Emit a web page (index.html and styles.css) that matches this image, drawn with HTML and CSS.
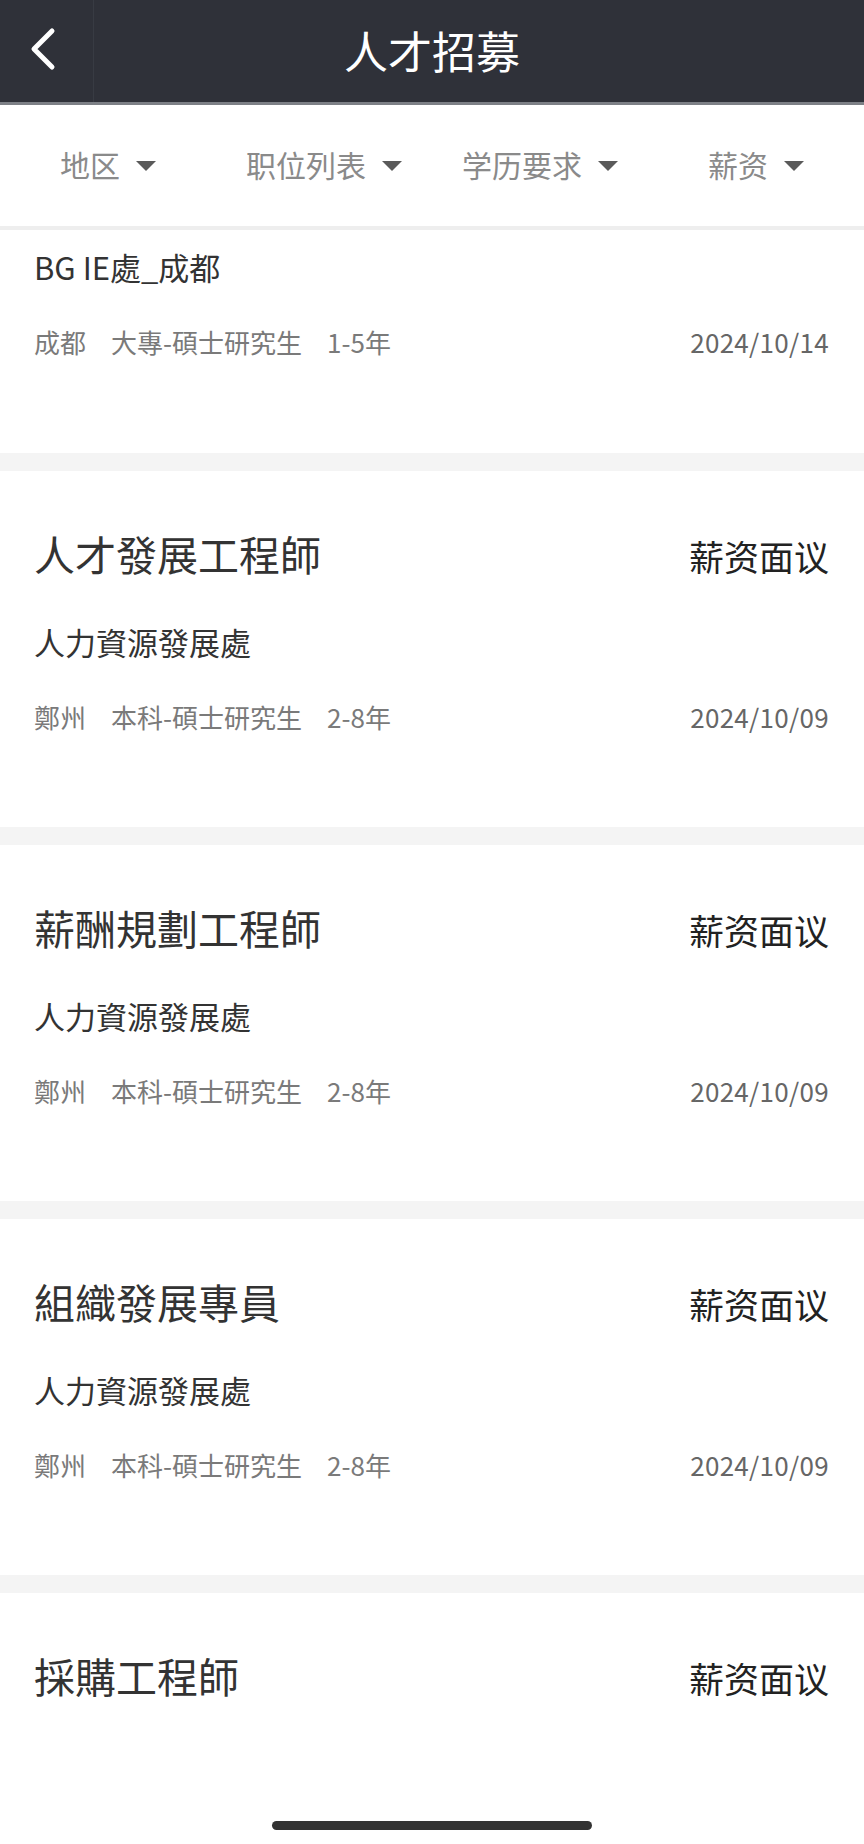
FILE: index.html
```html
<!DOCTYPE html>
<html lang="zh-Hant">
<head>
    <meta charset="UTF-8">
    <meta name="viewport" content="width=device-width, initial-scale=1.0">
    <title>人才招募</title>
    <link rel="stylesheet" href="styles.css">
</head>
<body>
    <div class="page">
        <header class="topbar">
            <div class="back">
                <svg width="30" height="44" viewBox="0 0 30 44">
                    <polyline points="24,4 6,22 24,40" fill="none" stroke="#fff" stroke-width="5" stroke-linecap="round" stroke-linejoin="round"/>
                </svg>
            </div>
            <h1>人才招募</h1>
            <div></div>
        </header>

        <nav class="filters">
            <div class="filter"><span>地区</span><i class="caret"></i></div>
            <div class="filter"><span>职位列表</span><i class="caret"></i></div>
            <div class="filter"><span>学历要求</span><i class="caret"></i></div>
            <div class="filter"><span>薪资</span><i class="caret"></i></div>
        </nav>

        <div class="list">
            <div class="card card-partial">
                <div class="dept">BG IE處_成都</div>
                <div class="meta">
                    <div class="tags"><span>成都</span><span>大專-碩士研究生</span><span>1-5年</span></div>
                    <span class="date">2024/10/14</span>
                </div>
            </div>

            <div class="card">
                <div class="head">
                    <span class="title">人才發展工程師</span>
                    <span class="salary">薪资面议</span>
                </div>
                <div class="dept">人力資源發展處</div>
                <div class="meta">
                    <div class="tags"><span>鄭州</span><span>本科-碩士研究生</span><span>2-8年</span></div>
                    <span class="date">2024/10/09</span>
                </div>
            </div>

            <div class="card">
                <div class="head">
                    <span class="title">薪酬規劃工程師</span>
                    <span class="salary">薪资面议</span>
                </div>
                <div class="dept">人力資源發展處</div>
                <div class="meta">
                    <div class="tags"><span>鄭州</span><span>本科-碩士研究生</span><span>2-8年</span></div>
                    <span class="date">2024/10/09</span>
                </div>
            </div>

            <div class="card">
                <div class="head">
                    <span class="title">組織發展專員</span>
                    <span class="salary">薪资面议</span>
                </div>
                <div class="dept">人力資源發展處</div>
                <div class="meta">
                    <div class="tags"><span>鄭州</span><span>本科-碩士研究生</span><span>2-8年</span></div>
                    <span class="date">2024/10/09</span>
                </div>
            </div>

            <div class="card card-last">
                <div class="head">
                    <span class="title">採購工程師</span>
                    <span class="salary">薪资面议</span>
                </div>
            </div>
        </div>

        <div class="home-bar"></div>
    </div>
</body>
</html>
```

FILE: styles.css
```css
* {
    box-sizing: border-box;
}
body {
    margin: 0;
    font-family: "Noto Sans CJK TC", "Noto Sans CJK SC", "Noto Sans", sans-serif;
    background: #fff;
}
.page {
    position: relative;
    height: 100vh;
    display: flex;
    flex-direction: column;
    overflow: hidden;
}
.topbar {
    display: grid;
    grid-template-columns: 94px 1fr 94px;
    height: 105px;
    background: #2f3139;
    border-bottom: 3px solid #7d8086;
}
.back {
    display: flex;
    align-items: center;
    justify-content: center;
    padding-right: 8px;
    padding-bottom: 4px;
    border-right: 1px solid #383b43;
}
.topbar h1 {
    margin: 0;
    text-align: center;
    color: #fff;
    font-size: 44px;
    font-weight: 400;
    line-height: 100px;
}
.filters {
    display: grid;
    grid-template-columns: repeat(4, 1fr);
    height: 125px;
    border-bottom: 4px solid #eeeeee;
    padding-bottom: 4px;
}
.filter {
    display: flex;
    align-items: center;
    justify-content: center;
    gap: 16px;
    color: #8a8a8a;
    font-size: 30px;
}
.caret {
    width: 0;
    height: 0;
    border-left: 10px solid transparent;
    border-right: 10px solid transparent;
    border-top: 10px solid #5a5a5a;
    margin-top: 4px;
}
.list {
    flex: 1;
    display: flex;
    flex-direction: column;
    gap: 18px;
    background: #f4f4f4;
}
.card {
    height: 356px;
    flex-shrink: 0;
    background: #fff;
    padding: 56px 35px 0 34px;
}
.card-partial {
    height: 223px;
    padding-top: 17px;
}
.card-last {
    flex: 1;
}
.head {
    display: flex;
    justify-content: space-between;
    align-items: baseline;
    line-height: 52px;
}
.title {
    font-size: 41px;
    color: #333;
}
.salary {
    font-size: 35px;
    color: #222;
}
.dept {
    margin-top: 40px;
    font-size: 31px;
    line-height: 40px;
    color: #333;
}
.card-partial .dept {
    margin-top: 0;
}
.meta {
    display: flex;
    justify-content: space-between;
    align-items: center;
    margin-top: 37px;
    line-height: 36px;
    font-size: 26px;
    color: #7a7a7a;
}
.tags {
    display: flex;
    gap: 25px;
}
.date {
    color: #666;
    letter-spacing: 0.3px;
}
.home-bar {
    position: absolute;
    left: 272px;
    bottom: 14px;
    width: 320px;
    height: 9px;
    border-radius: 5px;
    background: #333;
}
```
